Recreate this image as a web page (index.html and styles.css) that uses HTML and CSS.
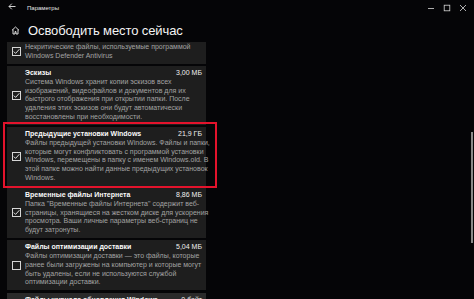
FILE: index.html
```html
<!DOCTYPE html>
<html lang="ru">
<head>
<meta charset="utf-8">
<title>Параметры</title>
<link rel="stylesheet" href="styles.css">
</head>
<body>
<div class="window">
  <div class="titlebar">
    <svg class="back" width="8" height="7" viewBox="0 0 8 7"><path d="M7.5 3.5H1M3.8 0.7L1 3.5l2.8 2.8" fill="none" stroke="#e8e8e8" stroke-width="0.9"/></svg>
    <span class="apptitle">Параметры</span>
    <div class="controls">
      <svg width="8" height="8" viewBox="0 0 8 8"><path d="M1 4.5h6" stroke="#d8d8d8" stroke-width="0.8"/></svg>
      <svg width="8" height="8" viewBox="0 0 8 8"><rect x="1.2" y="1.2" width="5.6" height="5.6" fill="none" stroke="#d8d8d8" stroke-width="0.8"/></svg>
      <svg width="8" height="8" viewBox="0 0 8 8"><path d="M1 1l6 6M7 1L1 7" stroke="#d8d8d8" stroke-width="0.8"/></svg>
    </div>
  </div>
  <div class="main">
    <div class="content">
      <div class="heading">
        <svg class="home" width="9" height="9" viewBox="0 0 9 9"><path d="M1 4.3L4.5 1 8 4.3M2 3.5V8h2V5.6h1V8h2V3.5" fill="none" stroke="#f0f0f0" stroke-width="0.9" stroke-linejoin="round"/></svg>
        <h1>Освободить место сейчас</h1>
      </div>
      <div class="viewport">
        <div class="list">
          <div class="card">
            <span class="cb checked"><svg viewBox="0 0 9 9"><path d="M1.8 4.6l1.8 1.8L7.4 2.2" fill="none" stroke="#f2f2f2" stroke-width="0.9"/></svg></span>
            <div class="body">
              <p class="desc">Некритические файлы, используемые программой<br>Windows Defender Antivirus</p>
            </div>
          </div>
          <div class="card">
            <span class="cb checked"><svg viewBox="0 0 9 9"><path d="M1.8 4.6l1.8 1.8L7.4 2.2" fill="none" stroke="#f2f2f2" stroke-width="0.9"/></svg></span>
            <div class="body">
              <div class="head"><span class="name">Эскизы</span><span class="size">3,00 МБ</span></div>
              <p class="desc">Система Windows хранит копии эскизов всех<br>изображений, видеофайлов и документов для их<br>быстрого отображения при открытии папки. После<br>удаления этих эскизов они будут автоматически<br>восстановлены при необходимости.</p>
            </div>
          </div>
          <div class="card marked">
            <span class="cb checked"><svg viewBox="0 0 9 9"><path d="M1.8 4.6l1.8 1.8L7.4 2.2" fill="none" stroke="#f2f2f2" stroke-width="0.9"/></svg></span>
            <div class="body">
              <div class="head"><span class="name">Предыдущие установки Windows</span><span class="size">21,9 ГБ</span></div>
              <p class="desc">Файлы предыдущей установки Windows. Файлы и папки,<br>которые могут конфликтовать с программой установки<br>Windows, перемещены в папку с именем Windows.old. В<br>этой папке можно найти данные предыдущих установок<br>Windows.</p>
            </div>
            <span class="highlight"></span>
          </div>
          <div class="card">
            <span class="cb checked"><svg viewBox="0 0 9 9"><path d="M1.8 4.6l1.8 1.8L7.4 2.2" fill="none" stroke="#f2f2f2" stroke-width="0.9"/></svg></span>
            <div class="body">
              <div class="head"><span class="name">Временные файлы Интернета</span><span class="size">8,86 МБ</span></div>
              <p class="desc">Папка "Временные файлы Интернета" содержит веб-<br>страницы, хранящиеся на жестком диске для ускорения<br>просмотра. Ваши личные параметры веб-страниц не<br>будут затронуты.</p>
            </div>
          </div>
          <div class="card">
            <span class="cb"></span>
            <div class="body">
              <div class="head"><span class="name">Файлы оптимизации доставки</span><span class="size">5,04 МБ</span></div>
              <p class="desc">Файлы оптимизации доставки — это файлы, которые<br>ранее были загружены на компьютер и которые могут<br>быть удалены, если не используются службой<br>оптимизации доставки.</p>
            </div>
          </div>
          <div class="card hover">
            <span class="cb"></span>
            <div class="body">
              <div class="head"><span class="name">Файлы журнала обновления Windows</span><span class="size">0 байт</span></div>
              <p class="desc">Файлы журнала обновления Windows.</p>
            </div>
          </div>
        </div>
      </div>
    </div>
    <div class="scrollbar"><div class="thumb"></div></div>
  </div>
</div>
</body>
</html>
```

FILE: styles.css
```css
* { box-sizing: border-box; }
html, body {
  margin: 0;
  padding: 0;
  background: #050507;
  width: 474px;
  height: 299px;
  overflow: hidden;
  font-family: "Liberation Sans", Arial, sans-serif;
  color: #fff;
}
.window {
  display: flex;
  flex-direction: column;
  height: 299px;
}
.titlebar {
  height: 15px;
  display: flex;
  align-items: center;
  padding-left: 8px;
  flex-shrink: 0;
}
.back { display: block; margin-top: -2px; }
.apptitle {
  margin-left: 11px;
  font-size: 6px;
  color: #e6e6e6;
}
.controls {
  margin-left: auto;
  display: flex;
  gap: 8px;
  padding-right: 7px;
}
.controls svg { display: block; }
.main {
  flex: 1;
  display: flex;
  min-height: 0;
}
.content {
  flex: 1;
  display: flex;
  flex-direction: column;
  min-height: 0;
}
.heading {
  height: 27px;
  display: flex;
  align-items: center;
  padding-left: 11px;
  flex-shrink: 0;
}
.home { display: block; margin-top: 3px; }
.heading h1 {
  margin: 0 0 0 8px;
  font-size: 13px;
  font-weight: normal;
  color: #f4f4f4;
  letter-spacing: -0.1px;
  padding-top: 4px;
}
.viewport {
  flex: 1;
  overflow: hidden;
  padding-left: 7px;
}
.list {
  width: 199px;
  margin-top: -2px;
  display: flex;
  flex-direction: column;
  gap: 2.5px;
}
.card {
  position: relative;
  display: flex;
  align-items: center;
  background: #1e1e1e;
  padding: 3px 4px 3px 5px;
}
.card.hover { background: #2a2a2a; }
.cb {
  width: 9px;
  height: 9px;
  border: 1px solid #d6d6d6;
  margin-right: 4px;
  flex-shrink: 0;
  display: block;
}
.cb svg {
  display: block;
  width: 9px;
  height: 9px;
  margin: -1px 0 0 -1px;
}
.body { flex: 1; min-width: 0; }
.head {
  display: flex;
  justify-content: space-between;
  font-size: 7px;
  line-height: 8.75px;
  white-space: nowrap;
}
.name { font-weight: bold; color: #fafafa; }
.size { color: #f0f0f0; }
.desc {
  margin: 0;
  font-size: 7px;
  line-height: 8.75px;
  color: #a3a3a3;
  white-space: nowrap;
}
.highlight {
  position: absolute;
  top: -5px;
  left: -4px;
  right: -11px;
  bottom: -2px;
  border: 2px solid #e3132c;
  pointer-events: none;
}
.scrollbar {
  width: 5px;
  flex-shrink: 0;
  padding-right: 1px;
  display: flex;
  flex-direction: column;
  align-items: flex-end;
}
.thumb {
  margin-top: 117px;
  width: 2px;
  height: 111px;
  background: #8a8a8a;
}
```
